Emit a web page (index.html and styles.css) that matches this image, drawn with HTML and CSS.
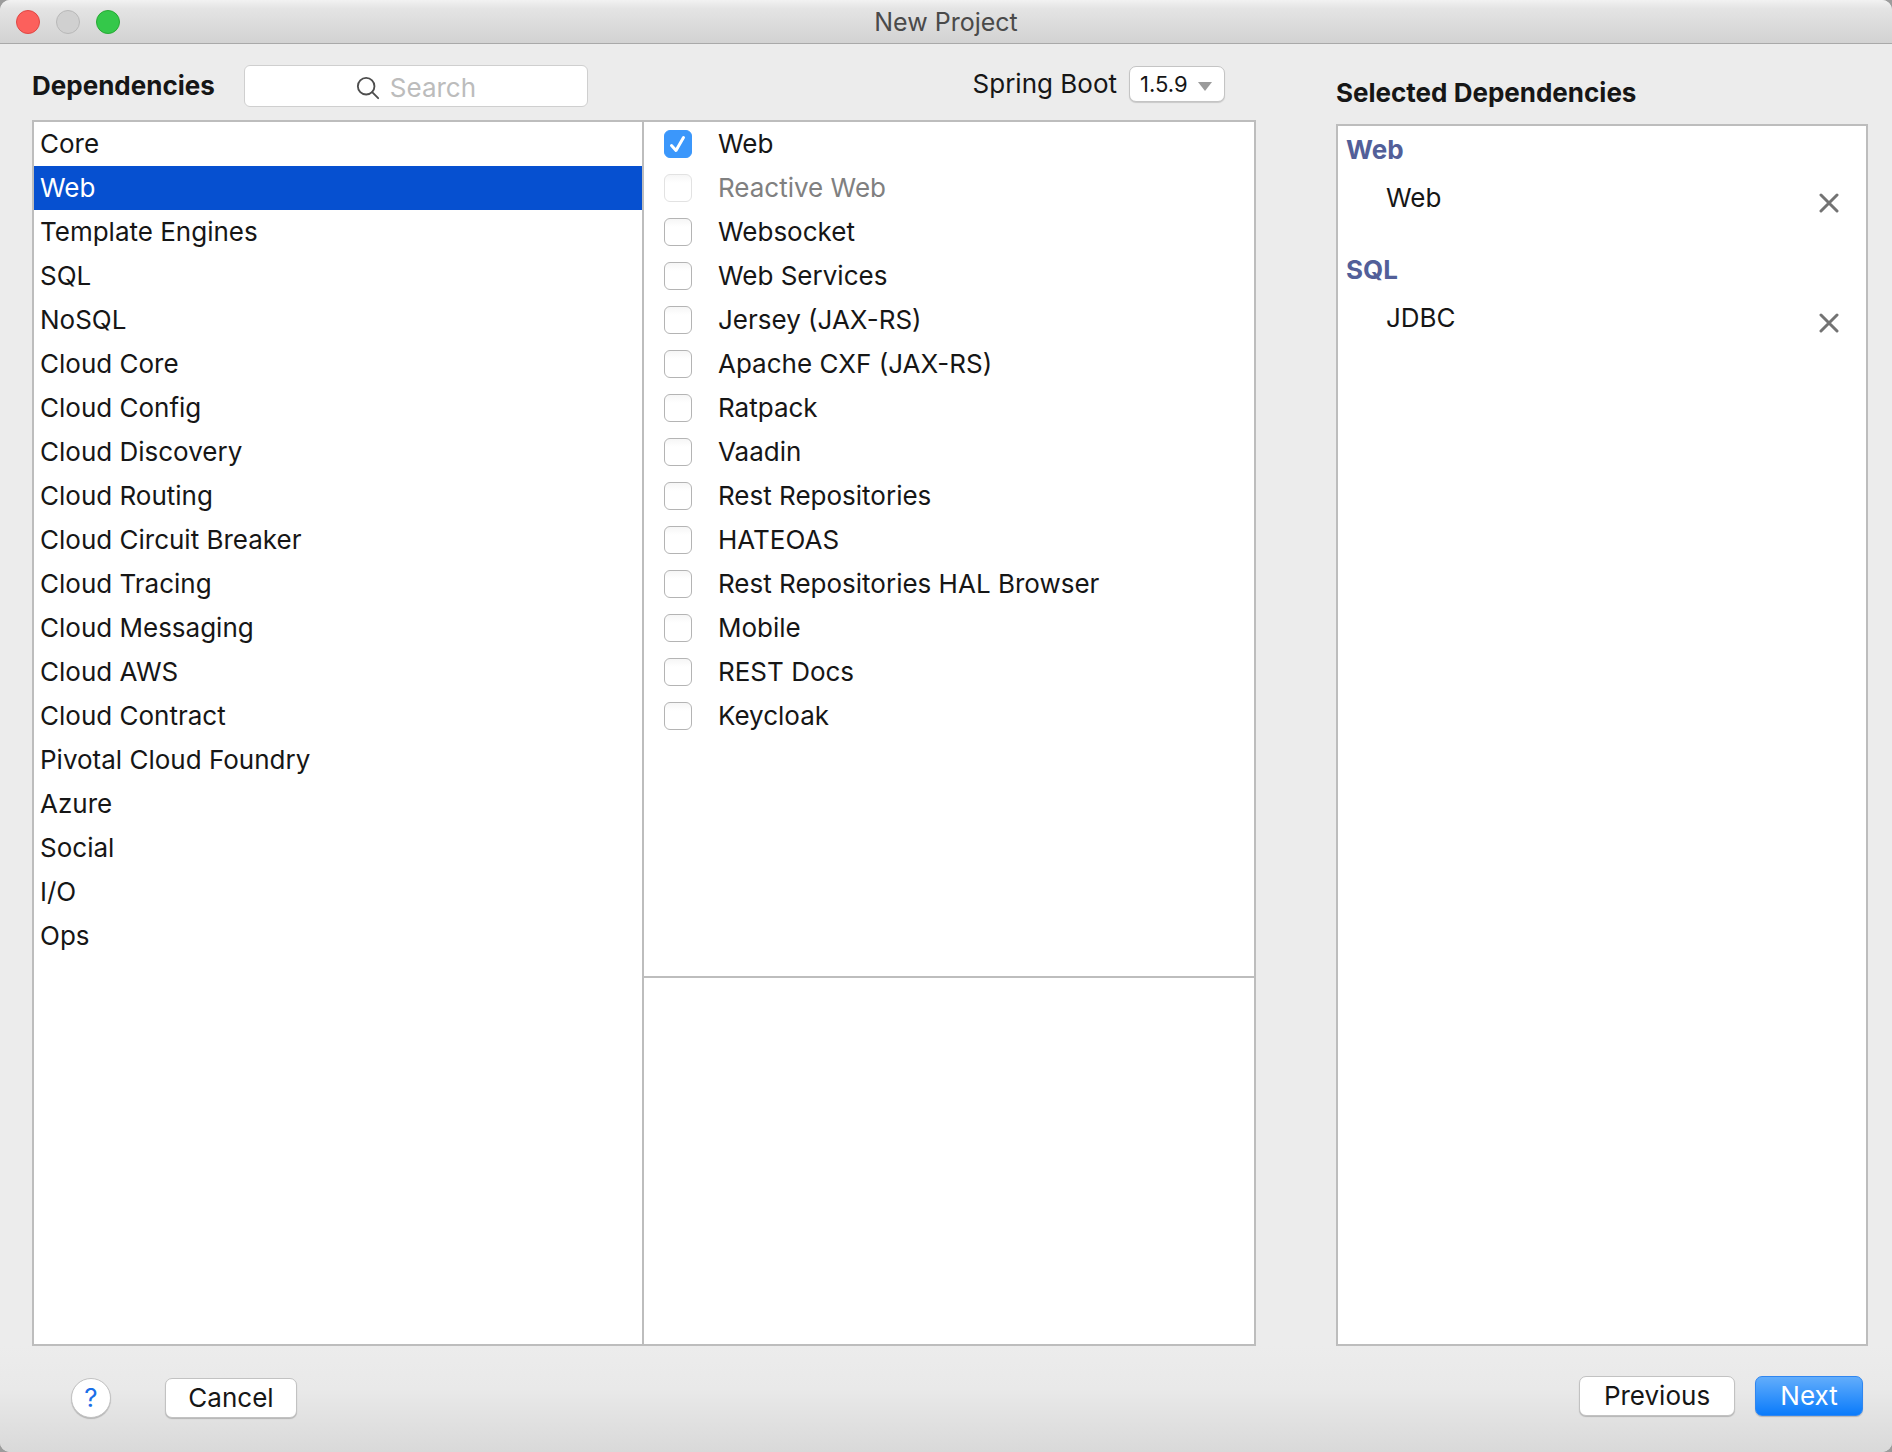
FILE: index.html
```html
<!DOCTYPE html>
<html lang="en">
<head>
    <meta charset="UTF-8">
    <meta name="viewport" content="width=device-width, initial-scale=1.0">
    <title>New Project</title>
    <link rel="stylesheet" href="styles.css">
</head>
<body>
    <div class="window">
        <header class="titlebar">
            <div class="lights">
                <button type="button" class="light close" aria-label="Close"></button>
                <button type="button" class="light minimize" aria-label="Minimize" disabled></button>
                <button type="button" class="light zoom" aria-label="Zoom"></button>
            </div>
            <h1>New Project</h1>
        </header>

        <main class="content">
            <section class="picker">
                <div class="toolbar">
                    <h2>Dependencies</h2>
                    <div class="search">
                        <svg width="24" height="24" viewBox="0 0 26 26" fill="none" stroke="#4d4d4d" stroke-width="2" stroke-linecap="round" aria-hidden="true">
                            <circle cx="11" cy="11" r="9"/>
                            <path d="M17.5 17.5L24 24"/>
                        </svg>
                        <input type="search" placeholder="Search" aria-label="Search">
                    </div>
                    <div class="version">
                        <label for="bootVersion">Spring Boot</label>
                        <div class="select">
                            <select id="bootVersion">
                                <option>1.5.9</option>
                            </select>
                            <span class="arrow"></span>
                        </div>
                    </div>
                </div>

                <div class="panes">
                    <ul class="categories">
                        <li><a href="#">Core</a></li>
                        <li><a href="#" class="active">Web</a></li>
                        <li><a href="#">Template Engines</a></li>
                        <li><a href="#">SQL</a></li>
                        <li><a href="#">NoSQL</a></li>
                        <li><a href="#">Cloud Core</a></li>
                        <li><a href="#">Cloud Config</a></li>
                        <li><a href="#">Cloud Discovery</a></li>
                        <li><a href="#">Cloud Routing</a></li>
                        <li><a href="#">Cloud Circuit Breaker</a></li>
                        <li><a href="#">Cloud Tracing</a></li>
                        <li><a href="#">Cloud Messaging</a></li>
                        <li><a href="#">Cloud AWS</a></li>
                        <li><a href="#">Cloud Contract</a></li>
                        <li><a href="#">Pivotal Cloud Foundry</a></li>
                        <li><a href="#">Azure</a></li>
                        <li><a href="#">Social</a></li>
                        <li><a href="#">I/O</a></li>
                        <li><a href="#">Ops</a></li>
                    </ul>
                    <div class="details">
                        <div class="options">
                            <label><input type="checkbox" checked>Web</label>
                            <label class="disabled"><input type="checkbox" disabled>Reactive Web</label>
                            <label><input type="checkbox">Websocket</label>
                            <label><input type="checkbox">Web Services</label>
                            <label><input type="checkbox">Jersey (JAX-RS)</label>
                            <label><input type="checkbox">Apache CXF (JAX-RS)</label>
                            <label><input type="checkbox">Ratpack</label>
                            <label><input type="checkbox">Vaadin</label>
                            <label><input type="checkbox">Rest Repositories</label>
                            <label><input type="checkbox">HATEOAS</label>
                            <label><input type="checkbox">Rest Repositories HAL Browser</label>
                            <label><input type="checkbox">Mobile</label>
                            <label><input type="checkbox">REST Docs</label>
                            <label><input type="checkbox">Keycloak</label>
                        </div>
                        <div class="description"></div>
                    </div>
                </div>
            </section>

            <section class="selected">
                <h2>Selected Dependencies</h2>
                <div class="selected-list">
                    <h3>Web</h3>
                    <div class="item">
                        <span>Web</span>
                        <button type="button" class="remove" aria-label="Remove Web">
                            <svg width="20" height="20" viewBox="0 0 20 20" stroke="#737373" stroke-width="3" stroke-linecap="round" aria-hidden="true">
                                <path d="M2 2L18 18M18 2L2 18"/>
                            </svg>
                        </button>
                    </div>
                    <h3>SQL</h3>
                    <div class="item">
                        <span>JDBC</span>
                        <button type="button" class="remove" aria-label="Remove JDBC">
                            <svg width="20" height="20" viewBox="0 0 20 20" stroke="#737373" stroke-width="3" stroke-linecap="round" aria-hidden="true">
                                <path d="M2 2L18 18M18 2L2 18"/>
                            </svg>
                        </button>
                    </div>
                </div>
            </section>
        </main>

        <footer class="actions">
            <div class="group left">
                <button type="button" class="help" aria-label="Help">?</button>
                <button type="button" class="btn cancel">Cancel</button>
            </div>
            <div class="group right">
                <button type="button" class="btn previous">Previous</button>
                <button type="button" class="btn next">Next</button>
            </div>
        </footer>
    </div>
</body>
</html>
```
FILE: styles.css
```css
* {
    box-sizing: border-box;
}
body {
    margin: 0;
    background-color: #9c9c9c;
    font-family: Inter, Roboto, sans-serif;
    font-size: 26px;
    line-height: 44px;
    color: #161616;
}
h1, h2, h3, ul {
    margin: 0;
    padding: 0;
}
button, input, select {
    font: inherit;
    color: inherit;
    margin: 0;
}
.window {
    min-height: 100vh;
    display: flex;
    flex-direction: column;
    background-color: #ececec;
    border-radius: 10px;
    overflow: hidden;
}

/* Title bar */
.titlebar {
    display: grid;
    grid-template-columns: 1fr auto 1fr;
    align-items: center;
    height: 44px;
    padding: 0 16px;
    background: linear-gradient(#f2f2f2, #e4e4e4 20%, #d2d2d2);
    border-bottom: 1px solid #a9a9a9;
}
.titlebar h1 {
    font-size: 25px;
    font-weight: 400;
    color: #4a4a4a;
}
.lights {
    display: flex;
    gap: 16px;
}
.light {
    width: 24px;
    height: 24px;
    padding: 0;
    border: 1px solid;
    border-radius: 50%;
}
.close {
    background-color: #fc605c;
    border-color: #df4744;
}
.minimize {
    background-color: #d0d0d0;
    border-color: #b8b8b8;
}
.zoom {
    background-color: #34c84a;
    border-color: #27a934;
}

/* Main area */
.content {
    flex: 1;
    display: grid;
    grid-template-columns: 1fr 532px;
    gap: 80px;
    padding: 0 24px 0 32px;
}
.picker, .selected {
    display: flex;
    flex-direction: column;
}
.content h2 {
    font-size: 26px;
    font-weight: 700;
}
.toolbar {
    display: flex;
    align-items: center;
    height: 76px;
    padding: 4px 31px 0 0;
}
.toolbar h2 {
    padding-top: 4px;
}
.search {
    display: flex;
    align-items: center;
    gap: 10px;
    width: 344px;
    height: 42px;
    margin: 4px 0 0 29px;
    padding: 4px 0 0 111px;
    background-color: #fff;
    border: 1px solid #cfcfcf;
    border-radius: 6px;
}
.search input {
    width: 120px;
    padding: 0;
    border: none;
    outline: none;
    background: none;
    line-height: 32px;
    appearance: none;
}
.search input::placeholder {
    color: #bcbcbc;
}
.version {
    display: flex;
    align-items: center;
    gap: 12px;
    margin-left: auto;
}
.select {
    display: grid;
    align-items: center;
    width: 96px;
    height: 36px;
    background-color: #fff;
    border: 1px solid #c4c4c4;
    border-radius: 7px;
    box-shadow: 0 1px 1px rgba(0, 0, 0, 0.15);
}
.select select, .arrow {
    grid-area: 1 / 1;
}
.select select {
    width: 100%;
    height: 34px;
    padding: 0 0 0 10px;
    border: none;
    background: none;
    font-size: 22px;
    line-height: 30px;
    appearance: none;
}
.arrow {
    justify-self: end;
    margin: 4px 12px 0 0;
    border: 7px solid transparent;
    border-top: 9px solid #9b9b9b;
    border-bottom: none;
    pointer-events: none;
}
.panes {
    flex: 1;
    display: grid;
    grid-template-columns: 1fr 1fr;
    background-color: #fff;
    border: 2px solid #bdbdbd;
}
.categories {
    list-style: none;
    border-right: 2px solid #bdbdbd;
}
.categories a {
    display: block;
    padding-left: 6px;
    color: inherit;
    text-decoration: none;
}
.categories .active {
    background-color: #0650d0;
    color: #fff;
}
.details {
    display: flex;
    flex-direction: column;
}
.options {
    flex: 7 1 0;
}
.description {
    flex: 3 1 0;
    border-top: 2px solid #bdbdbd;
}
.options label {
    display: flex;
    align-items: center;
    gap: 26px;
    padding-left: 20px;
}
.options .disabled {
    color: #808080;
}
.options input {
    width: 28px;
    height: 28px;
    appearance: none;
    border: 1px solid #b4b4b4;
    border-radius: 6px;
    background: linear-gradient(#f6f6f6, #fff 30%);
}
.options input:disabled {
    border-color: #e2e2e2;
}
.options input:checked {
    border-color: #3b97fb;
    background: #3b97fb url("data:image/svg+xml,%3Csvg xmlns='http://www.w3.org/2000/svg' viewBox='0 0 26 26' fill='none' stroke='white' stroke-width='3' stroke-linecap='round' stroke-linejoin='round'%3E%3Cpath d='M6.5 14.5L11 19.5L18.5 6.5'/%3E%3C/svg%3E") center / 26px 26px no-repeat;
}

/* Selected dependencies */
.selected h2 {
    padding: 27px 0 9px;
}
.selected-list {
    flex: 1;
    background-color: #fff;
    border: 2px solid #bdbdbd;
}
.selected-list h3 {
    padding: 2px 0 0 8px;
    font-size: 26px;
    font-weight: 700;
    color: #525f99;
}
.item {
    display: flex;
    justify-content: space-between;
    padding: 4px 27px 26px 48px;
}
.remove {
    display: flex;
    align-items: center;
    padding: 9px 0 0;
    border: none;
    background: none;
}

/* Footer buttons */
.actions {
    display: flex;
    justify-content: space-between;
    height: 106px;
    padding: 30px 29px 0 71px;
    background: linear-gradient(#ececec, #e9e9e9 40%, #d9d9d9);
}
.group {
    display: flex;
    align-items: flex-start;
}
.left {
    gap: 54px;
    padding-top: 2px;
}
.right {
    gap: 20px;
}
.btn, .help {
    height: 40px;
    padding: 0;
    border: 1px solid #c2c2c2;
    background-color: #fff;
    box-shadow: 0 1px 1px rgba(0, 0, 0, 0.2);
    line-height: 38px;
}
.btn {
    border-radius: 7px;
}
.help {
    width: 40px;
    border-radius: 50%;
    color: #1a6fe8;
}
.cancel {
    width: 132px;
}
.previous {
    width: 156px;
}
.next {
    width: 108px;
    border-color: #2f86f0;
    background: linear-gradient(#62adfb, #0a7bfb);
    color: #fff;
}
```
